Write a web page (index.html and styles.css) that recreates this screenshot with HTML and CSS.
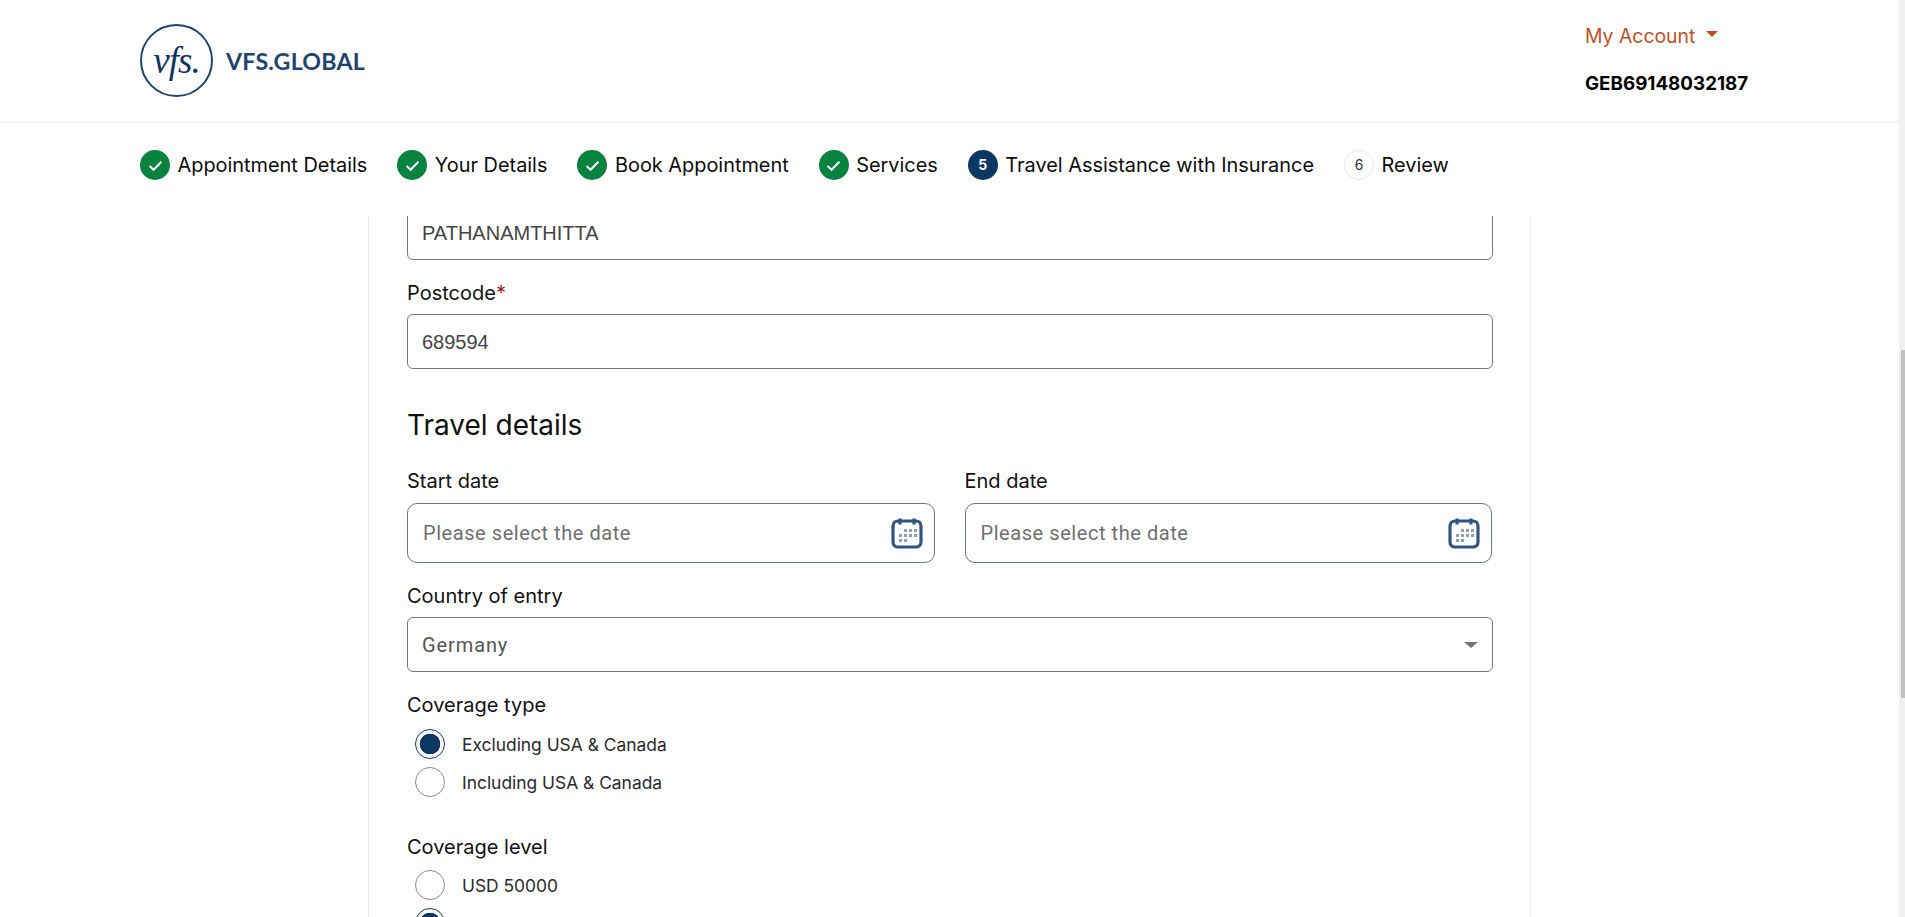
FILE: index.html
```html
<!DOCTYPE html>
<html lang="en">
<head>
<meta charset="utf-8">
<title>Travel Assistance with Insurance</title>
<link rel="stylesheet" href="styles.css">
</head>
<body>
<div class="page">
  <div class="main">
    <header class="header">
      <div class="logo">
        <div class="logo-mark"><span>vfs.</span></div>
        <span class="logo-text">VFS.GLOBAL</span>
      </div>
      <div class="account">
        <div class="account-link">My Account <span class="caret"></span></div>
        <div class="account-id">GEB69148032187</div>
      </div>
    </header>
    <nav class="steps">
      <div class="step"><span class="dot done"><svg viewBox="0 0 16 16"><path d="M3 8.4l3.4 3.2L13 4.8"/></svg></span>Appointment Details</div>
      <div class="step"><span class="dot done"><svg viewBox="0 0 16 16"><path d="M3 8.4l3.4 3.2L13 4.8"/></svg></span>Your Details</div>
      <div class="step"><span class="dot done"><svg viewBox="0 0 16 16"><path d="M3 8.4l3.4 3.2L13 4.8"/></svg></span>Book Appointment</div>
      <div class="step"><span class="dot done"><svg viewBox="0 0 16 16"><path d="M3 8.4l3.4 3.2L13 4.8"/></svg></span>Services</div>
      <div class="step"><span class="dot active">5</span>Travel Assistance with Insurance</div>
      <div class="step"><span class="dot todo">6</span>Review</div>
    </nav>
    <div class="content">
      <section class="card">
        <div class="field first"><div class="input typed">PATHANAMTHITTA</div></div>
        <label class="label postcode">Postcode<span class="req">*</span></label>
        <div class="input typed">689594</div>
        <h2 class="heading">Travel details</h2>
        <div class="dates">
          <div class="date-col">
            <label class="label">Start date</label>
            <div class="input date"><span class="placeholder">Please select the date</span>
              <svg class="cal" viewBox="0 0 32 32"><rect x="2" y="4" width="28" height="26" rx="5" class="cal-box"/><path d="M9 1.5v6M23 1.5v6" class="cal-box"/><g class="cal-dots"><rect x="13" y="12" width="3" height="3"/><rect x="18" y="12" width="3" height="3"/><rect x="23" y="12" width="3" height="3"/><rect x="8" y="17" width="3" height="3"/><rect x="13" y="17" width="3" height="3"/><rect x="18" y="17" width="3" height="3"/><rect x="23" y="17" width="3" height="3"/><rect x="8" y="22" width="3" height="3"/><rect x="13" y="22" width="3" height="3"/></g></svg>
            </div>
          </div>
          <div class="date-col">
            <label class="label">End date</label>
            <div class="input date"><span class="placeholder">Please select the date</span>
              <svg class="cal" viewBox="0 0 32 32"><rect x="2" y="4" width="28" height="26" rx="5" class="cal-box"/><path d="M9 1.5v6M23 1.5v6" class="cal-box"/><g class="cal-dots"><rect x="13" y="12" width="3" height="3"/><rect x="18" y="12" width="3" height="3"/><rect x="23" y="12" width="3" height="3"/><rect x="8" y="17" width="3" height="3"/><rect x="13" y="17" width="3" height="3"/><rect x="18" y="17" width="3" height="3"/><rect x="23" y="17" width="3" height="3"/><rect x="8" y="22" width="3" height="3"/><rect x="13" y="22" width="3" height="3"/></g></svg>
            </div>
          </div>
        </div>
        <label class="label country">Country of entry</label>
        <div class="input select"><span class="select-value">Germany</span><span class="select-caret"></span></div>
        <label class="label cov-type">Coverage type</label>
        <div class="radios">
          <div class="radio-row"><span class="radio on"></span>Excluding USA &amp; Canada</div>
          <div class="radio-row"><span class="radio"></span>Including USA &amp; Canada</div>
        </div>
        <label class="label cov-level">Coverage level</label>
        <div class="radios">
          <div class="radio-row"><span class="radio"></span>USD 50000</div>
          <div class="radio-row"><span class="radio on"></span></div>
        </div>
      </section>
    </div>
  </div>
  <div class="scrollbar"><div class="thumb"></div></div>
</div>
</body>
</html>
```
FILE: styles.css
```css
* { box-sizing: border-box; }
html, body { margin: 0; height: 100%; overflow: hidden; background: #fff; }
body { font-family: Inter, "Liberation Sans", sans-serif; color: #0c0c0c; }
.page { display: flex; height: 917px; overflow: hidden; }
.main { flex: 1; min-width: 0; display: flex; flex-direction: column; overflow: hidden; }
.scrollbar { width: 6px; background: #f1f1f1; padding: 350px 0 0 2px; }
.thumb { height: 348px; background: #c1c1c1; }

.header { height: 123px; flex: none; display: flex; justify-content: space-between; padding: 0 49px 0 140px; border-bottom: 2px solid #f4f4f4; }
.logo { display: flex; align-items: center; gap: 13px; }
.logo-mark { width: 73px; height: 73px; border: 2px solid #1f4570; border-radius: 50%; display: flex; align-items: center; justify-content: center; }
.logo-mark span { font-family: "Liberation Serif", serif; font-style: italic; font-size: 37px; color: #0e3560; letter-spacing: -1px; line-height: 1; }
.logo-text { font-family: Lato, sans-serif; font-weight: 700; font-size: 23.2px; color: #1f4470; letter-spacing: 0.2px; }
.account { width: 265px; padding-top: 24px; }
.account-link { font-size: 19.4px; line-height: 24px; color: #bd5125; display: flex; align-items: center; gap: 11px; }
.caret { width: 0; height: 0; border-left: 6px solid transparent; border-right: 6px solid transparent; border-top: 6px solid #bd4b1b; margin: 0 0 4px 0; }
.account-id { font-size: 18.8px; font-weight: 700; color: #000; line-height: 24px; margin-top: 24px; }

.steps { height: 93px; flex: none; display: flex; align-items: flex-start; padding: 27px 0 0 140px; gap: 30px; font-size: 19.9px; line-height: 30px; background: #fff; position: relative; z-index: 1; }
.step { display: flex; align-items: center; gap: 7.5px; white-space: nowrap; }
.dot { width: 30px; height: 30px; border-radius: 50%; display: flex; align-items: center; justify-content: center; font-size: 14px; flex: none; }
.dot svg { width: 19px; height: 19px; fill: none; stroke: #fff; stroke-width: 1.7; }
.done { background: #05833f; }
.active { background: #0d3763; color: #fff; font-weight: 700; }
.todo { border: 1px solid #e8e8e8; color: #333; background: #fff; }

.content { flex: 1; display: flex; justify-content: flex-start; padding-left: 368px; overflow: hidden; }
.card { width: 1163px; height: 800px; border: 1px solid #e6e9ee; border-top: 0; padding: 0 37px 0 38px; }
.input { display: flex; align-items: center; height: 55px; border: 1px solid #777; border-radius: 6px; padding: 0 14px; font-size: 18px; color: #333; }
.typed { font-family: "Liberation Sans", sans-serif; font-size: 20px; color: #444; padding-top: 2px; }
.first { margin-top: -11px; }
.label { display: block; font-size: 20px; line-height: 24px; color: #111; }
.req { color: #9c1c2e; }
.postcode { margin-top: 21px; margin-bottom: 9px; }
.heading { font-weight: 400; font-size: 28px; line-height: 36px; margin: 38px 0 26px; color: #111; }
.dates { display: flex; gap: 30px; padding-right: 1px; }
.date-col { flex: 1; }
.date-col .label { margin-bottom: 10px; }
.date { height: 60px; justify-content: space-between; padding: 0 11px 0 15px; border-radius: 10px; border-color: #6d7782; font-family: Roboto, sans-serif; font-size: 20px; }
.placeholder { color: #6f6f6f; letter-spacing: 0.56px; }
.cal { width: 32px; height: 32px; }
.cal-box { fill: none; stroke: #2f5680; stroke-width: 3.2; }
.cal-dots { fill: #8aa1ba; }
.country { margin-top: 21px; margin-bottom: 9px; }
.select { justify-content: space-between; padding-right: 14px; }
.select-value { font-family: Roboto, sans-serif; font-size: 20px; letter-spacing: 0.9px; color: #555; }
.select-caret { width: 0; height: 0; border-left: 7px solid transparent; border-right: 7px solid transparent; border-top: 6px solid #757575; }
.cov-type { margin-top: 21px; margin-bottom: 12px; }
.radios { display: flex; flex-direction: column; gap: 8px; padding-left: 8px; }
.radio-row { display: flex; align-items: center; gap: 17px; font-size: 17.4px; color: #2b2b2b; height: 30px; }
.radio { width: 30px; height: 30px; border: 1px solid #8a8a8a; border-radius: 50%; flex: none; }
.radio.on { border-color: #0d3763; background: radial-gradient(circle, #0d3763 0 10px, #fff 10.6px); }
.cov-level { margin-top: 38px; margin-bottom: 11px; }
```
